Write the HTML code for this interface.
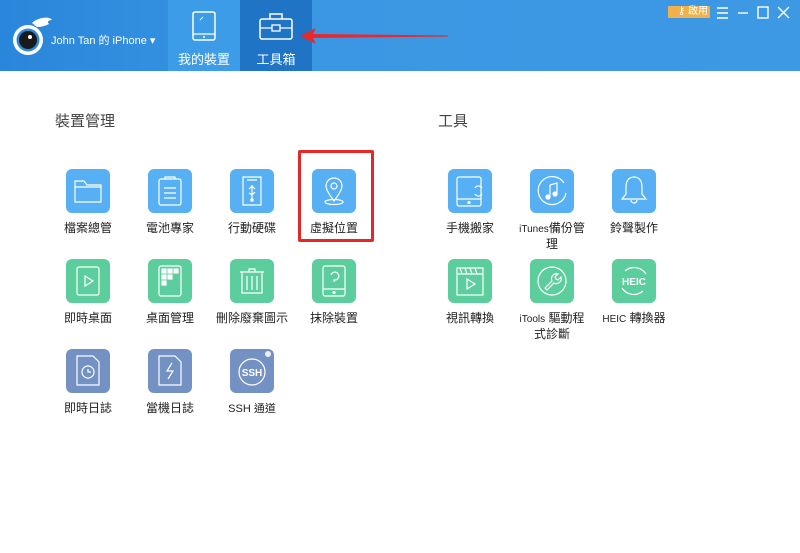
<!DOCTYPE html>
<html><head><meta charset="utf-8"><style>
*{margin:0;padding:0;box-sizing:border-box}
body{width:800px;height:553px;background:#fff;position:relative;overflow:hidden;font-family:"Liberation Sans","Noto Sans CJK TC",sans-serif;color:#333}
.hdr{position:absolute;left:0;top:0;width:800px;height:71px;background:linear-gradient(90deg,#2a86da,#3b97e3 40%,#3d99e4)}
.tab{position:absolute;top:0;height:71px;width:72px;color:#fff;font-size:13px;text-align:center}
.tab span{position:absolute;left:0;right:0;top:49px}
.sec{position:absolute;font-size:15px;color:#444;top:110px}
.it{position:absolute;width:82px;text-align:center;font-size:12px;color:#222;line-height:14px}
.ic{width:44px;height:44px;border-radius:6px;margin:0 auto 8px;position:relative}
.b{background:#56b0f3}.g{background:#5ccd9c}.s{background:#7392c3}
.ic svg{position:absolute;left:0;top:0}
.n{padding:0 6px}
</style></head><body>
<div class="hdr"></div>
<!-- logo -->
<svg style="position:absolute;left:10px;top:14px" width="44" height="42" viewBox="0 0 44 42">
<path d="M22 9 C28 3 40 2 42 6 C38 6 37 8 39 10 C35 12 31 13 27 13" fill="#fff"/>
<circle cx="18" cy="26" r="15" fill="#fff"/>
<circle cx="18" cy="26" r="11.5" fill="#2b88db"/>
<circle cx="18" cy="26" r="9" fill="#1a1a1a"/>
<circle cx="20" cy="23" r="2" fill="#fff"/>
</svg>
<div style="position:absolute;left:51px;top:32px;color:#fff;font-size:11px">John Tan 的 iPhone ▾</div>
<div class="tab" style="left:168px;background:#3d9ce8">
<svg style="position:absolute;left:24px;top:11px" width="24" height="30"><rect x="1" y="1" width="22" height="28" rx="2" fill="none" stroke="#fff" stroke-width="1.5"/><line x1="1" y1="23" x2="23" y2="23" stroke="#fff" stroke-width="1.3"/><circle cx="12" cy="26" r="1" fill="#fff"/><line x1="8" y1="9" x2="11" y2="6" stroke="#fff"/></svg>
<span>我的裝置</span></div>
<div class="tab" style="left:240px;background:#1f74c5">
<svg style="position:absolute;left:19px;top:12px" width="34" height="28"><rect x="1" y="7" width="32" height="20" rx="2" fill="none" stroke="#fff" stroke-width="1.5"/><path d="M11 7V2h12v5" fill="none" stroke="#fff" stroke-width="1.5"/><line x1="1" y1="16" x2="33" y2="16" stroke="#fff" stroke-width="1.3"/><rect x="13" y="13" width="8" height="6" fill="#1f74c5" stroke="#fff" stroke-width="1.3"/></svg>
<span>工具箱</span></div>
<!-- arrow -->
<svg style="position:absolute;left:298px;top:26px" width="160" height="20"><polygon points="2,10 18,2 15,8 150,9.5 150,10.5 15,12 18,18" fill="#e8282a"/></svg>
<!-- top right -->
<div style="position:absolute;left:668px;top:6px;width:42px;height:12px;background:#f0b04a;color:#fff;font-size:10px;line-height:12px;text-align:right;padding-right:2px;border-radius:1px">⚷ 啟用</div>
<svg style="position:absolute;left:716px;top:5px" width="80" height="16" stroke="#fff" stroke-width="1.4" fill="none"><path d="M1 3h11M1 8h11M1 13h11"/><path d="M22 8h10"/><rect x="42" y="2" width="10" height="11"/><path d="M62 2l11 11M73 2L62 13"/></svg>
<div class="sec" style="left:55px">裝置管理</div>
<div class="sec" style="left:438px">工具</div>
<div style="position:absolute;left:298px;top:150px;width:76px;height:92px;border:3px solid #e5292b;border-radius:2px"></div>

<div class="it" style="left:47px;top:169px"><div class="ic b"><svg width="44" height="44" fill="none" stroke="#fff" stroke-width="1.2"><path d="M9 12h9l3 4h14v17H9z"/><path d="M9 18h26"/></svg></div>檔案總管</div>
<div class="it" style="left:129px;top:169px"><div class="ic b"><svg width="44" height="44" fill="none" stroke="#fff" stroke-width="1.2"><rect x="11" y="10" width="22" height="26" rx="2"/><path d="M17 10V8h10v2M16 19h12M16 24h12M16 29h12"/></svg></div>電池專家</div>
<div class="it" style="left:211px;top:169px"><div class="ic b"><svg width="44" height="44" fill="none" stroke="#fff" stroke-width="1.2"><path d="M13 8h18v28H13z"/><path d="M17 11h10M22 16v14M19 20l3-3 3 3M19 24l3 2 3-3"/><circle cx="22" cy="31" r="1.2" fill="#fff"/></svg></div>行動硬碟</div>
<div class="it" style="left:293px;top:169px"><div class="ic b"><svg width="44" height="44" fill="none" stroke="#fff" stroke-width="1.2"><path d="M22 32C16 24 14 20 14 17a8 8 0 0 1 16 0c0 3-2 7-8 15z"/><circle cx="22" cy="17" r="3"/><ellipse cx="22" cy="33" rx="9" ry="2.5"/></svg></div>虛擬位置</div>

<div class="it" style="left:47px;top:259px"><div class="ic g"><svg width="44" height="44" fill="none" stroke="#fff" stroke-width="1.2"><rect x="11" y="8" width="22" height="28" rx="2"/><path d="M19 17v10l8-5z"/></svg></div>即時桌面</div>
<div class="it" style="left:129px;top:259px"><div class="ic g"><svg width="44" height="44" fill="#fff" stroke="#fff" stroke-width="1.2"><rect x="11" y="7" width="22" height="30" rx="2" fill="none"/><rect x="14" y="10" width="4" height="4"/><rect x="20" y="10" width="4" height="4"/><rect x="26" y="10" width="4" height="4"/><rect x="14" y="16" width="4" height="4"/><rect x="20" y="16" width="4" height="4"/><rect x="14" y="22" width="4" height="4"/></svg></div>桌面管理</div>
<div class="it" style="left:211px;top:259px"><div class="ic g"><svg width="44" height="44" fill="none" stroke="#fff" stroke-width="1.2"><path d="M10 13h24M19 13v-3h6v3M12 13v21h20V13M17 17v14M22 17v14M27 17v14"/></svg></div>刪除廢棄圖示</div>
<div class="it" style="left:293px;top:259px"><div class="ic g"><svg width="44" height="44" fill="none" stroke="#fff" stroke-width="1.2"><rect x="11" y="7" width="22" height="30" rx="2"/><path d="M11 30h22"/><circle cx="22" cy="33.5" r="1" fill="#fff"/><path d="M19 16a4 4 0 1 1 3 5v2"/></svg></div>抹除裝置</div>

<div class="it" style="left:47px;top:349px"><div class="ic s"><svg width="44" height="44" fill="none" stroke="#fff" stroke-width="1.2"><path d="M11 7h16l6 6v23H11z"/><circle cx="22" cy="23" r="6"/><path d="M22 20v3h3"/></svg></div>即時日誌</div>
<div class="it" style="left:129px;top:349px"><div class="ic s"><svg width="44" height="44" fill="none" stroke="#fff" stroke-width="1.2"><path d="M11 7h16l6 6v23H11z"/><path d="M24 14l-5 8h6l-5 8"/></svg></div>當機日誌</div>
<div class="it" style="left:211px;top:349px"><div class="ic s"><svg width="44" height="44" fill="none" stroke="#fff" stroke-width="1.2"><circle cx="22" cy="23" r="13"/><circle cx="38" cy="5" r="3" fill="#eee" stroke="none"/><text x="22" y="27" text-anchor="middle" font-size="10" font-weight="bold" fill="#fff" stroke="none" font-family="Liberation Sans">SSH</text></svg></div><span style="font-size:11px">SSH 通道</span></div>

<div class="it" style="left:429px;top:169px"><div class="ic b"><svg width="44" height="44" fill="none" stroke="#fff" stroke-width="1.2"><rect x="9" y="8" width="24" height="29" rx="2"/><path d="M9 30h24"/><circle cx="21" cy="33.5" r="1" fill="#fff"/><path d="M27 19a4 4 0 0 1 7 0M34 25a4 4 0 0 1-7 0"/></svg></div>手機搬家</div>
<div class="it n" style="left:511px;top:169px"><div class="ic b"><svg width="44" height="44" fill="none" stroke="#fff" stroke-width="1.2"><path d="M34 14A14 14 0 1 0 36 24"/><path d="M20 16l7-2v11M20 16v12"/><circle cx="18" cy="28" r="2" fill="#fff"/><circle cx="25" cy="25" r="2" fill="#fff"/></svg></div><span style="font-size:10px">iTunes</span>備份管理</div>
<div class="it" style="left:593px;top:169px"><div class="ic b"><svg width="44" height="44" fill="none" stroke="#fff" stroke-width="1.2"><path d="M22 8c-6 0-8 5-8 10v7l-4 5h24l-4-5v-7c0-5-2-10-8-10z"/><path d="M19 31a3 3 0 0 0 6 0"/></svg></div>鈴聲製作</div>

<div class="it" style="left:429px;top:259px"><div class="ic g"><svg width="44" height="44" fill="none" stroke="#fff" stroke-width="1.2"><rect x="9" y="9" width="26" height="27"/><path d="M9 15h26M12 9l2 6M17 9l2 6M22 9l2 6M27 9l2 6M19 20v10l8-5z"/></svg></div>視訊轉換</div>
<div class="it n" style="left:511px;top:259px"><div class="ic g"><svg width="44" height="44" fill="none" stroke="#fff" stroke-width="1.2"><circle cx="22" cy="22" r="14"/><path d="M15 29l7-7a5 5 0 0 1 6-7l-3 3 1 2 2 1 3-3a5 5 0 0 1-7 6l-7 7z"/></svg></div><span style="font-size:10px">iTools</span> 驅動程式診斷</div>
<div class="it" style="left:593px;top:259px"><div class="ic g"><svg width="44" height="44" fill="none" stroke="#fff" stroke-width="1.2"><path d="M13 12a14 14 0 0 1 21 3M31 32a14 14 0 0 1-21-3"/><text x="22" y="26" text-anchor="middle" font-size="10" font-weight="bold" fill="#fff" stroke="none" font-family="Liberation Sans">HEIC</text></svg></div><span style="font-size:10px">HEIC</span> 轉換器</div>
</body></html>
